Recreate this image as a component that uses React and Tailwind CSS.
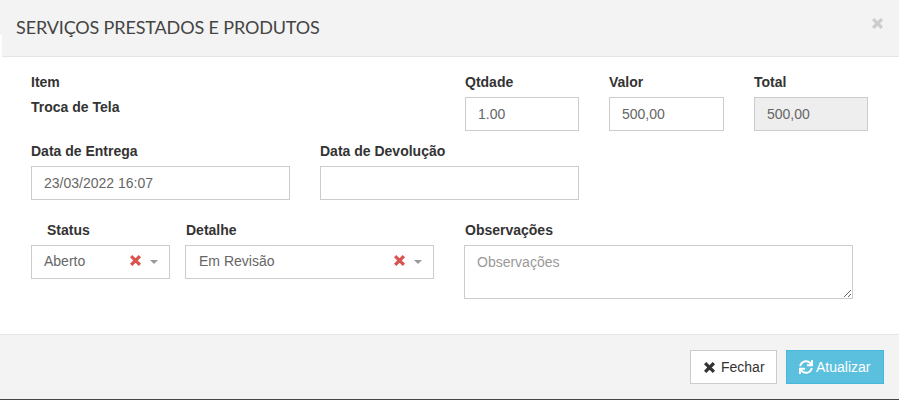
import { FaSync } from 'react-icons/fa'

const labelClass = 'block text-sm font-bold text-[#333] leading-[20px] mb-[5px]'
const inputClass = 'block w-full h-[34px] border border-[#ccc] px-3 text-sm text-[#666] leading-[32px]'

// X grosso, igual ao glifo do FontAwesome 4
const ChunkyX = ({ className = '' }) => (
    <svg viewBox="0 0 11 11" className={className} fill="none">
        <path d="M2.3 2.3 L8.7 8.7 M8.7 2.3 L2.3 8.7" stroke="currentColor" strokeWidth="3.3" strokeLinecap="square" />
    </svg>
)

const Caret = () => (
    <svg viewBox="0 0 8 4" className="w-[8px] h-[4px] text-[#999]">
        <path d="M0 0 H8 L4 4 Z" fill="currentColor" />
    </svg>
)

const Field = ({ label, value, className = '', disabled = false }) => (
    <div className={className}>
        <label className={labelClass}>{label}</label>
        <div className={`${inputClass} ${disabled ? 'bg-[#eeeeee]' : 'bg-white'}`}>{value}</div>
    </div>
)

const SelectField = ({ label, value, className = '', labelClassName = '', valueClassName = '' }) => (
    <div className={className}>
        <label className={`${labelClass} ${labelClassName}`}>{label}</label>
        <div className="flex items-center h-[34px] border border-[#ccc] bg-white pr-[11px] text-sm text-[#666]">
            <span className={`flex-1 pb-[2px] ${valueClassName}`}>{value}</span>
            <ChunkyX className="w-[11px] h-[11px] text-[#d9534f] mb-[3px] mr-[9px]" />
            <Caret />
        </div>
    </div>
)

export default function App() {
    return (
        <div className="w-[899px] h-[400px] flex flex-col bg-white font-['Liberation_Sans',Arial,sans-serif] border-b border-[#444]">
            {/* Header */}
            <div className="relative h-[57px] flex items-center bg-[#f3f3f3] border-b border-[#e5e5e5] pl-[16px]">
                <div className="absolute left-0 top-[35px] w-[2px] h-[22px] bg-white" />
                <h4 className="font-['Lato',sans-serif] text-[18px] tracking-[-0.14px] text-[#444] mb-[1px]">SERVIÇOS PRESTADOS E PRODUTOS</h4>
                <ChunkyX className="absolute right-[16px] top-[18px] w-[11px] h-[11px] text-[#ccc]" />
            </div>

            {/* Body */}
            <div className="flex-1 pl-[31px] pt-[15px]">
                <div className="flex">
                    <div className="w-[434px]">
                        <label className={labelClass}>Item</label>
                        <div className="text-sm font-bold text-[#333] leading-[20px] mt-[5px]">Troca de Tela</div>
                    </div>
                    <Field label="Qtdade" value="1.00" className="w-[114px]" />
                    <Field label="Valor" value="500,00" className="w-[115px] ml-[30px]" />
                    <Field label="Total" value="500,00" className="w-[114px] ml-[30px]" disabled />
                </div>

                <div className="flex mt-[10px]">
                    <Field label="Data de Entrega" value="23/03/2022 16:07" className="w-[259px]" />
                    <Field label="Data de Devolução" value="" className="w-[259px] ml-[30px]" />
                </div>

                <div className="flex mt-[20px]">
                    <SelectField label="Status" value="Aberto" className="w-[139px]" labelClassName="pl-[16px]" valueClassName="pl-[12px]" />
                    <SelectField label="Detalhe" value="Em Revisão" className="w-[249px] ml-[15px]" labelClassName="pl-[1px]" valueClassName="pl-[13px]" />
                    <div className="w-[389px] ml-[30px]">
                        <label className={`${labelClass} pl-[1px]`}>Observações</label>
                        <textarea
                            placeholder="Observações"
                            className="block w-full h-[54px] border border-[#ccc] bg-white px-3 py-[6px] text-sm leading-[20px] text-[#555] placeholder:text-[#999] outline-none"
                        />
                    </div>
                </div>
            </div>

            {/* Footer */}
            <div className="h-[65px] flex items-start justify-end gap-[9px] bg-[#f3f3f3] border-t border-[#e5e5e5] pt-[15px] pr-[15px]">
                <button className="flex items-center h-[34px] w-[87px] pl-[13px] gap-[6px] border border-[#ccc] bg-white text-sm text-[#333]">
                    <ChunkyX className="w-[11px] h-[11px] text-[#333]" />
                    Fechar
                </button>
                <button className="flex items-center h-[34px] w-[98px] pl-[12px] gap-[3px] border border-[#46b8da] bg-[#5bc0de] text-sm text-white">
                    <FaSync className="w-[14px] h-[14px]" />
                    Atualizar
                </button>
            </div>
        </div>
    )
}
